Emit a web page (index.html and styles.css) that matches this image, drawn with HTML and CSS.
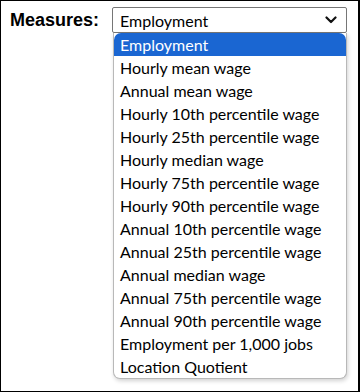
FILE: index.html
```html
<!DOCTYPE html>
<html>
<head>
<meta charset="utf-8">
<link rel="stylesheet" href="styles.css">
</head>
<body>
<div class="frame">
  <div class="row">
    <label class="label">Measures:</label>
    <div class="select-wrap">
      <div class="select">
        <span class="value">Employment</span>
        <svg class="chev" width="12" height="8" viewBox="0 0 12 8"><path d="M1.5 1.5 L6 6 L10.5 1.5" fill="none" stroke="#111" stroke-width="2.2" stroke-linecap="round" stroke-linejoin="round"/></svg>
      </div>
      <ul class="menu">
        <li class="opt active">Employment</li>
        <li class="opt">Hourly mean wage</li>
        <li class="opt">Annual mean wage</li>
        <li class="opt">Hourly 10th percentile wage</li>
        <li class="opt">Hourly 25th percentile wage</li>
        <li class="opt">Hourly median wage</li>
        <li class="opt">Hourly 75th percentile wage</li>
        <li class="opt">Hourly 90th percentile wage</li>
        <li class="opt">Annual 10th percentile wage</li>
        <li class="opt">Annual 25th percentile wage</li>
        <li class="opt">Annual median wage</li>
        <li class="opt">Annual 75th percentile wage</li>
        <li class="opt">Annual 90th percentile wage</li>
        <li class="opt">Employment per 1,000 jobs</li>
        <li class="opt">Location Quotient</li>
      </ul>
    </div>
  </div>
</div>
</body>
</html>
```
FILE: styles.css
```css
html, body {
  margin: 0;
  padding: 0;
  background: #fff;
}
.frame {
  box-sizing: border-box;
  width: 360px;
  height: 392px;
  border: 1px solid #000;
  border-right-width: 2px;
  position: relative;
  overflow: hidden;
}
.row {
  display: flex;
  align-items: flex-start;
  padding: 6px 0 0 9px;
  gap: 13px;
}
.label {
  font-family: "Liberation Sans", Arial, sans-serif;
  font-weight: bold;
  font-size: 18px;
  line-height: 26px;
  color: #000;
}
.select-wrap {
  position: relative;
  width: 235px;
}
.select {
  box-sizing: border-box;
  height: 26px;
  border: 1px solid #767676;
  border-radius: 2px;
  display: flex;
  align-items: center;
  justify-content: space-between;
  padding: 0 9px 0 7px;
  font-family: Lato, "Open Sans", sans-serif;
  font-size: 16px;
  color: #000;
  background: #fff;
}
.chev {
  display: block;
}
.menu {
  position: absolute;
  left: 1px;
  top: 26px;
  width: 234px;
  box-sizing: border-box;
  margin: 0;
  padding: 0;
  list-style: none;
  background: #fff;
  border: 1px solid #b8b8b8;
  border-top: none;
  border-radius: 0 0 7px 7px;
  box-shadow: 1px 2px 4px rgba(0,0,0,0.18);
  overflow: hidden;
}
.opt {
  height: 23px;
  line-height: 23px;
  padding-left: 6px;
  font-family: Lato, "Open Sans", sans-serif;
  font-size: 16px;
  color: #000;
  white-space: nowrap;
}
.opt.active {
  background: #1a66d2;
  color: #fff;
  border-radius: 7px 7px 0 0;
}
```
